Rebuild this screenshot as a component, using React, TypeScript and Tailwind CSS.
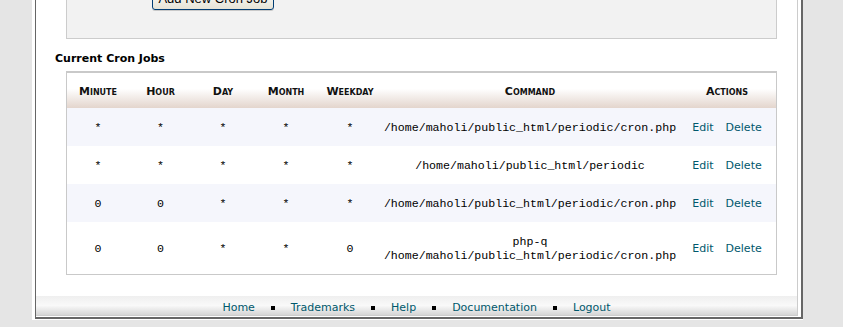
const jobs = [
  { minute: "*", hour: "*", day: "*", month: "*", weekday: "*", command: ["/home/maholi/public_html/periodic/cron.php"] },
  { minute: "*", hour: "*", day: "*", month: "*", weekday: "*", command: ["/home/maholi/public_html/periodic"] },
  { minute: "0", hour: "0", day: "*", month: "*", weekday: "*", command: ["/home/maholi/public_html/periodic/cron.php"] },
  { minute: "0", hour: "0", day: "*", month: "*", weekday: "0", command: ["php-q", "/home/maholi/public_html/periodic/cron.php"] },
];

const headers = ["Minute", "Hour", "Day", "Month", "Weekday", "Command", "Actions"];
const widths = [62, 63, 62, 64, 64, 296, 98];
const footerLinks = ["Home", "Trademarks", "Help", "Documentation", "Logout"];

export default function App() {
  return (
    <div className="h-[327px] overflow-hidden bg-[#e5e5e5] pl-[32px] font-['DejaVu_Sans',Verdana,sans-serif]">
      {/* page frame with shadow-ish borders */}
      <div className="w-[771px] bg-white pb-[1px] pl-[3px]">
        <div className="border-b-2 border-l border-r-2 border-[#666]">
          <div className="pb-[1px] pr-[3px]">
            <div className="border-b border-r border-[#ccc] pl-[30px] pr-[20px]">
              {/* add form box (scrolled off the top) */}
              <div className="flex h-[39px] w-[711px] items-start border-x border-b border-[#ccc] bg-[#f2f2f2] pl-[85px]">
                <button className="-mt-[12px] h-[22px] w-[122px] shrink-0 rounded-[3px] border border-[#003c74] bg-gradient-to-b from-white to-[#e6e3d6] font-['Liberation_Sans',Arial,sans-serif] text-[13px] leading-[20px] text-black shadow-[0_1px_0_#c9c9c9]">
                  Add New Cron Job
                </button>
              </div>

              <h2 className="-ml-[11px] mt-[13px] text-[11px] font-bold leading-[14px] text-black">
                Current Cron Jobs
              </h2>

              <div className="mt-[5px] w-[711px] border border-t-2 border-[#c9c9c9]">
                <table className="w-[709px] table-fixed border-collapse">
                  <colgroup>
                    {widths.map((w, i) => (
                      <col key={i} style={{ width: w }} />
                    ))}
                  </colgroup>
                  <thead>
                    <tr className="h-[35px] bg-gradient-to-b from-white from-45% to-[#e3d5cd]">
                      {headers.map((h) => (
                        <th key={h} className="p-0 pt-[4px] text-center text-[11px] font-bold text-[#111] [font-variant:small-caps]">
                          {h}
                        </th>
                      ))}
                    </tr>
                  </thead>
                  <tbody>
                    {jobs.map((job, i) => (
                      <tr key={i} className={i % 2 === 0 ? "bg-[#f5f6fc]" : "bg-white"}>
                        {[job.minute, job.hour, job.day, job.month, job.weekday].map((v, j) => (
                          <td key={j} className="p-0 pb-[11px] pt-[13px] text-center font-['Liberation_Mono','Courier_New',monospace] text-[11.6px] leading-[14px] text-black">
                            {v}
                          </td>
                        ))}
                        <td className="p-0 pb-[11px] pt-[13px] text-center font-['Liberation_Mono','Courier_New',monospace] text-[11.6px] leading-[14px] text-black">
                          {job.command.map((c) => (
                            <div key={c}>{c}</div>
                          ))}
                        </td>
                        <td className="p-0 pb-[11px] pt-[13px] text-center text-[11px] leading-[14px] text-[#00586c]">
                          <span>Edit</span>
                          <span className="ml-[12px]">Delete</span>
                        </td>
                      </tr>
                    ))}
                  </tbody>
                </table>
              </div>

              {/* footer bar */}
              <div className="-ml-[30px] -mr-[20px] mt-[21px] flex h-[19px] items-start justify-center bg-gradient-to-b from-[#efefef] via-[#f9f9f9] to-[#d5d5d5] pt-[5px] text-[11px] leading-[13px] text-[#00586c]">
                {footerLinks.map((l, i) => (
                  <div key={l} className="flex items-center">
                    {i > 0 && <span className="mx-[16px] h-[4px] w-[4px] bg-black" />}
                    <span>{l}</span>
                  </div>
                ))}
              </div>
            </div>
          </div>
        </div>
      </div>
    </div>
  );
}
